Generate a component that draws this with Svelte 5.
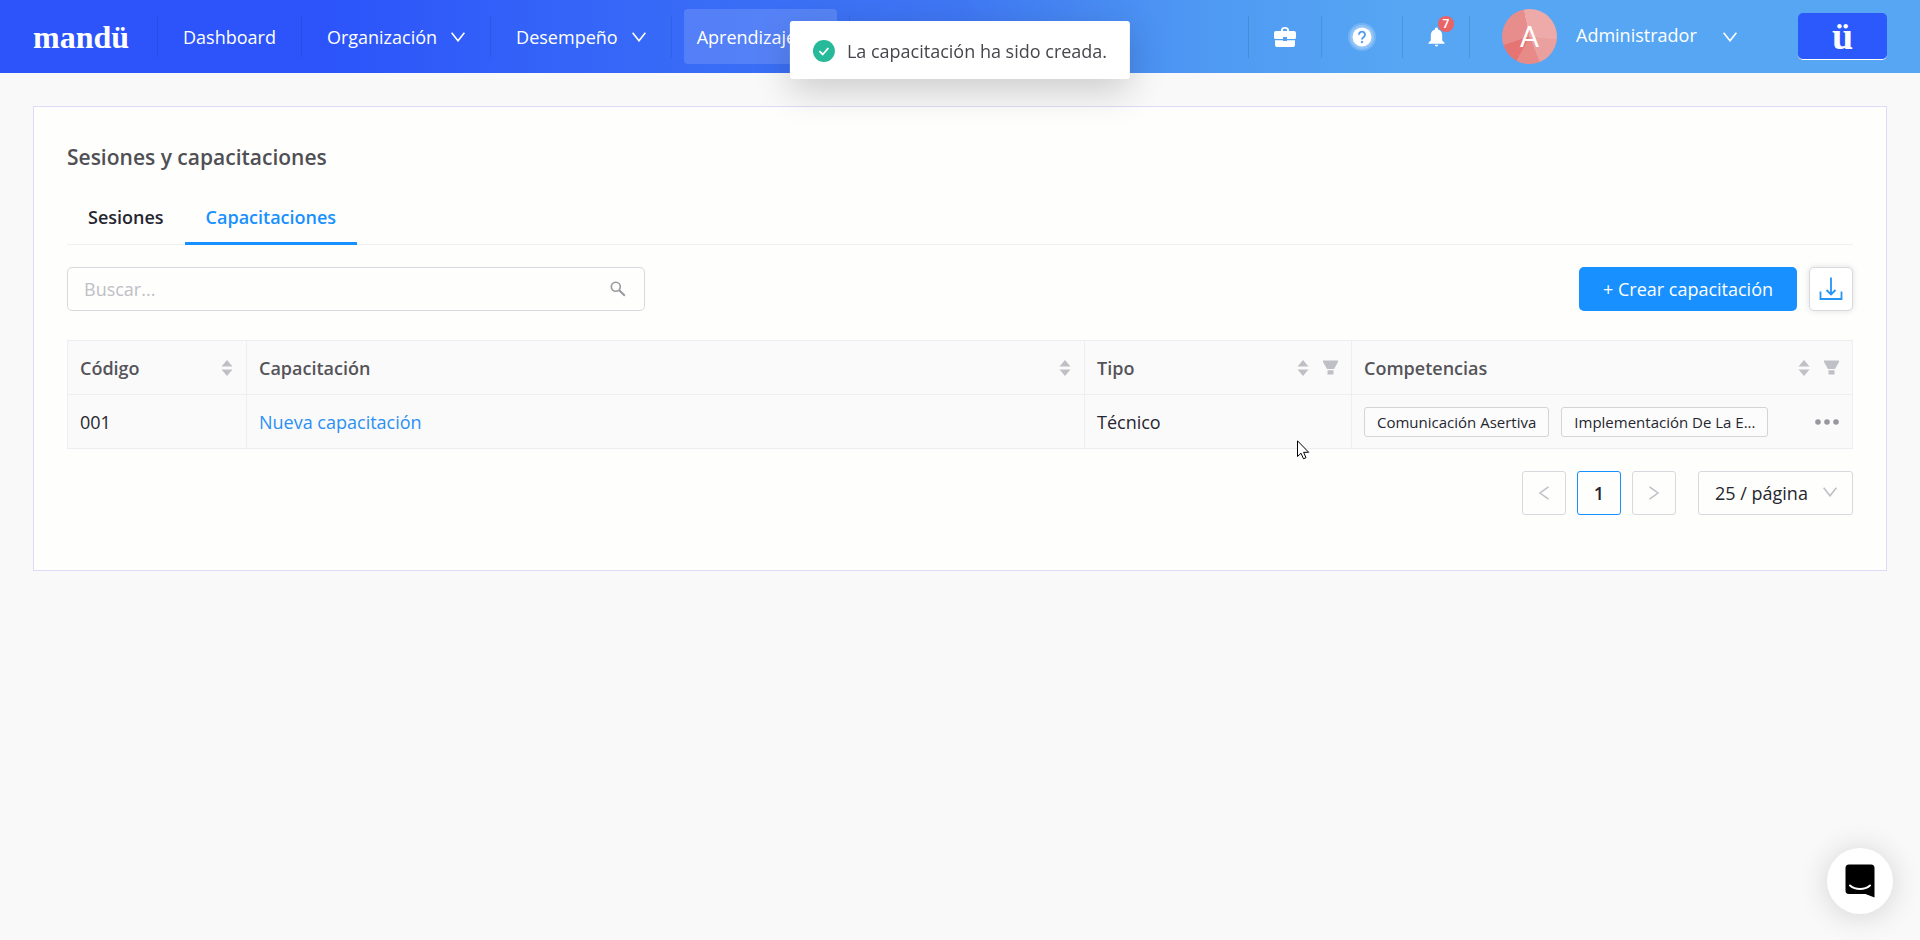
<script lang="ts">
  interface Training {
    code: string;
    name: string;
    type: string;
    skills: string[];
  }

  const menu = [
    { label: 'Dashboard', children: false, active: false },
    { label: 'Organización', children: true, active: false },
    { label: 'Desempeño', children: true, active: false },
    { label: 'Aprendizaje', children: true, active: true }
  ];

  const columns = [
    { key: 'code', title: 'Código', filter: false },
    { key: 'name', title: 'Capacitación', filter: false },
    { key: 'type', title: 'Tipo', filter: true },
    { key: 'skills', title: 'Competencias', filter: true }
  ];

  const trainings: Training[] = [
    {
      code: '001',
      name: 'Nueva capacitación',
      type: 'Técnico',
      skills: ['Comunicación Asertiva', 'Implementación De La E...']
    }
  ];

  let tab = $state('Capacitaciones');
  let search = $state('');
  let pageSize = $state('25');
</script>

{#snippet chevron()}
  <svg class="chevron" viewBox="0 0 14 10" fill="none" stroke="currentColor" stroke-width="1.6">
    <path d="M0.6 0.8L7 8.8L13.4 0.8" />
  </svg>
{/snippet}

<header class="topbar">
  <a class="logo" href="#home">mandü</a>

  <nav class="menu">
    {#each menu as item}
      <div class="menu-item">
        <a href="#{item.label}" class:active={item.active}>
          {item.label}
          {#if item.children}{@render chevron()}{/if}
        </a>
      </div>
    {/each}
  </nav>

  <div class="tools">
    <button class="tool work" aria-label="Trabajo">
      <svg width="22" height="20" viewBox="0 0 22 20" fill="currentColor">
        <path
          fill-rule="evenodd"
          d="M7 4V3.2C7 1.2 8.6 0 11 0s4 1.2 4 3.2V4h5a2 2 0 0 1 2 2v4.5a1.5 1.5 0 0 1-1.500 1.500H13v-2H9v2H1.500A1.500 1.500 0 0 1 0 10.500V6a2 2 0 0 1 2-2zM9 4h4v-.8C13 2.300 12.300 1.800 11 1.800S9 2.300 9 3.200z"
        />
        <path d="M1 13.200h8V14h4v-.8h8V18a2 2 0 0 1-2 2H3a2 2 0 0 1-2-2z" />
      </svg>
    </button>
    <button class="tool help" aria-label="Ayuda">
      <svg width="30" height="30" viewBox="0 0 30 30">
        <circle cx="15" cy="15" r="14" fill="#fff" opacity="0.18" />
        <circle cx="15" cy="15" r="12" fill="#fff" opacity="0.22" />
        <circle cx="15" cy="15" r="9.500" fill="#fff" />
        <path d="M12 12.800a3 3 0 1 1 4.700 2.300c-1 .8-1.700 1.100-1.700 2.500" fill="none" stroke="#529ff2" stroke-width="1.900" />
        <circle cx="15" cy="20" r="1.200" fill="#529ff2" />
      </svg>
    </button>
    <button class="tool alerts" aria-label="Notificaciones">
      <svg width="17" height="20" viewBox="0 0 17 20" fill="currentColor">
        <path
          d="M8.500 0.500c.9 0 1.500.7 1.500 1.500v.6c2.600.7 4.200 2.800 4.200 5.600v5.300l2.300 2.300v.9H.5v-.9l2.300-2.300V8.200c0-2.800 1.600-4.900 4.200-5.600V2c0-.8.600-1.500 1.500-1.500zM6.800 17.700h3.400a1.700 1.700 0 0 1-3.400 0z"
        />
      </svg>
      <span class="badge">7</span>
    </button>
    <button class="user">
      <span class="avatar">A</span>
      <span class="user-name">Administrador</span>
      {@render chevron()}
    </button>
    <button class="brand">ü</button>
  </div>
</header>

<main class="card">
  <h1>Sesiones y capacitaciones</h1>

  <div class="tabs" role="tablist">
    {#each ['Sesiones', 'Capacitaciones'] as name}
      <button role="tab" aria-selected={tab === name} class:selected={tab === name} onclick={() => (tab = name)}>
        {name}
      </button>
    {/each}
  </div>

  <div class="toolbar">
    <div class="search">
      <input type="text" placeholder="Buscar..." aria-label="Buscar" bind:value={search} />
      <svg width="16" height="16" viewBox="0 0 16 16" fill="none" stroke="currentColor">
        <circle cx="5.800" cy="5.800" r="4.500" stroke-width="1.600" />
        <path d="M9.200 9.200L14.800 14.800" stroke-width="2" />
      </svg>
    </div>
    <div class="actions">
      <button class="primary">+ Crear capacitación</button>
      <button class="download" aria-label="Descargar">
        <svg width="24" height="24" viewBox="0 0 24 24" fill="none" stroke="currentColor" stroke-width="1.800">
          <path d="M12 0.500V17M7.500 13L12 17.500L16.500 13M1.500 14.500V22h21v-7.500" />
        </svg>
      </button>
    </div>
  </div>

  <table>
    <colgroup>
      {#each columns as col}
        <col class="col-{col.key}" />
      {/each}
    </colgroup>
    <thead>
      <tr>
        {#each columns as col}
          <th scope="col">
            <div class="head">
              <span class="head-title">{col.title}</span>
              <svg width="12" height="18" viewBox="0 0 12 18" fill="currentColor">
                <path d="M6 1L11.500 7.500H0.500zM6 17L0.500 10.500h11z" />
              </svg>
              {#if col.filter}
                <svg width="15" height="15" viewBox="0 0 15 15" fill="currentColor">
                  <path d="M0 0.500h15v1.500L11 9H4L0 2zM4.500 10.300h6V14.500h-6z" />
                </svg>
              {/if}
            </div>
          </th>
        {/each}
      </tr>
    </thead>
    <tbody>
      {#each trainings as row}
        <tr>
          <td>{row.code}</td>
          <td><a href="#{row.code}">{row.name}</a></td>
          <td>{row.type}</td>
          <td>
            <div class="skills">
              {#each row.skills as skill}
                <span class="tag">{skill}</span>
              {/each}
              <button class="more" aria-label="Más opciones">
                <svg width="24" height="6" viewBox="0 0 24 6" fill="currentColor">
                  <circle cx="3" cy="3" r="2.800" />
                  <circle cx="12" cy="3" r="2.800" />
                  <circle cx="21" cy="3" r="2.800" />
                </svg>
              </button>
            </div>
          </td>
        </tr>
      {/each}
    </tbody>
  </table>

  <div class="pagination">
    <button class="page" disabled aria-label="Anterior">
      <svg width="10" height="14" viewBox="0 0 10 14" fill="none" stroke="currentColor" stroke-width="1.500">
        <path d="M9.500 0.800L1 7L9.500 13.200" />
      </svg>
    </button>
    <button class="page current">1</button>
    <button class="page" disabled aria-label="Siguiente">
      <svg width="10" height="14" viewBox="0 0 10 14" fill="none" stroke="currentColor" stroke-width="1.500">
        <path d="M0.500 0.800L9 7L0.500 13.200" />
      </svg>
    </button>
    <div class="page-size">
      <select bind:value={pageSize} aria-label="Resultados por página">
        <option value="25">25 / página</option>
        <option value="50">50 / página</option>
      </select>
      {@render chevron()}
    </div>
  </div>
</main>

<div class="toast" role="status">
  <svg width="22" height="22" viewBox="0 0 22 22">
    <circle cx="11" cy="11" r="11" fill="#26b99a" />
    <path d="M6.500 11.200L9.800 14.500L15.500 8" fill="none" stroke="#fff" stroke-width="1.800" />
  </svg>
  La capacitación ha sido creada.
</div>

<button class="chat" aria-label="Chat">
  <svg width="30" height="34" viewBox="0 0 30 34">
    <path d="M4 0.500h22a3.500 3.500 0 0 1 3.500 3.500v29.500L20.500 30H4a3.500 3.500 0 0 1-3.500-3.500V4A3.500 3.500 0 0 1 4 .5z" fill="#000" />
    <path d="M5 21.500c5.500 4.700 14.500 4.700 20 0" fill="none" stroke="#fff" stroke-width="2" stroke-linecap="round" />
  </svg>
</button>

<svg class="cursor" width="13" height="20" viewBox="0 0 13 20" fill="#fff" stroke="#000">
  <path d="M0.500 0.800V16.500L4 13.200L6.500 18.800L9 17.700L6.600 12.300H11.700z" />
</svg>

<style>
  :global(body) {
    min-height: 100vh;
    background: #f9f9f9;
    color: #262630;
    font: 18px/28px 'Open Sans', 'Noto Sans', sans-serif;
  }

  button,
  input,
  select {
    font: inherit;
    color: inherit;
    box-sizing: border-box;
  }

  button {
    padding: 0;
    border: none;
    background: none;
    cursor: pointer;
  }

  a {
    color: inherit;
    text-decoration: none;
  }

  svg {
    flex-shrink: 0;
    display: block;
  }

  .chevron {
    width: 14px;
    height: 10px;
  }

  .topbar {
    display: flex;
    align-items: center;
    height: 73px;
    padding: 0 33px;
    background: linear-gradient(90deg, #2c54fa 17%, #3565f8 30%, #3f77f3 50%, #4e98f3 62%, #56a6f3 73%);
    color: #fff;
  }

  .logo {
    width: 124px;
    font: bold 32px/40px 'Liberation Serif', serif;
  }

  .menu {
    display: flex;
    flex: 1;
  }

  .menu-item {
    display: flex;
    align-items: center;
    height: 42px;
    padding: 0 12px;
    border-left: 1px solid rgba(0, 0, 0, 0.07);
  }

  .menu-item:last-child {
    border-right: 1px solid rgba(0, 0, 0, 0.07);
  }

  .menu-item a {
    display: flex;
    align-items: center;
    gap: 14px;
    height: 55px;
    padding: 0 13px;
    border-radius: 4px;
  }

  .menu-item a.active {
    background: rgba(255, 255, 255, 0.14);
  }

  .tools {
    display: flex;
    align-items: center;
  }

  .tool {
    display: flex;
    align-items: center;
    justify-content: center;
    box-sizing: border-box;
    height: 42px;
    border-left: 1px solid rgba(0, 0, 0, 0.1);
  }

  .work {
    width: 73px;
  }

  .help {
    width: 81px;
  }

  .alerts {
    position: relative;
    width: 68px;
    border-right: 1px solid rgba(0, 0, 0, 0.1);
  }

  .badge {
    position: absolute;
    top: 0;
    right: 15px;
    width: 16px;
    height: 16px;
    border-radius: 50%;
    background: #ea6365;
    font: 600 12px/16px Roboto, sans-serif;
    text-align: center;
  }

  .user {
    display: flex;
    align-items: center;
    margin-left: 32px;
    text-align: left;
  }

  .avatar {
    width: 55px;
    height: 55px;
    margin-right: 19px;
    border-radius: 50%;
    background: conic-gradient(from -12deg, #edaaa9 0 108deg, #e9a09f 108deg 170deg, #e78a88 170deg 220deg, #e67473 220deg 264deg, #e78e8c 264deg);
    font: 28px/55px Lato, sans-serif;
    text-align: center;
  }

  .user-name {
    width: 147px;
    padding-bottom: 4px;
  }

  .brand {
    width: 89px;
    height: 47px;
    margin-left: 61px;
    border-bottom: 1px solid #fff;
    border-radius: 5px;
    background: #2b59fc;
    font: bold 38px/40px 'Liberation Serif', serif;
  }

  .card {
    margin: 33px;
    padding: 33px 33px 55px;
    border: 1px solid #dddcf8;
    background: #fefefd;
  }

  h1 {
    margin: 0;
    font-size: 21px;
    font-weight: 600;
    line-height: 34px;
    color: #4f4f54;
  }

  .tabs {
    display: flex;
    height: 70px;
    border-bottom: 1px solid #f0f0f4;
  }

  .tabs button {
    height: 71px;
    padding: 18px 21px 0;
    border-bottom: 3px solid transparent;
    font-weight: 600;
    font-size: 18px;
  }

  .tabs button.selected {
    border-color: #1890ff;
    color: #1890ff;
  }

  .toolbar {
    display: flex;
    justify-content: space-between;
    margin: 22px 0 29px;
  }

  .search {
    display: flex;
    align-items: center;
    box-sizing: border-box;
    width: 578px;
    height: 44px;
    padding: 0 18px 0 16px;
    border: 1px solid #d8d8de;
    border-radius: 5px;
    color: #98989f;
  }

  .search input {
    flex: 1;
    padding: 0;
    border: none;
    outline: none;
    background: none;
    color: #262630;
  }

  .search input::placeholder {
    color: #bfbfc6;
  }

  .actions {
    display: flex;
    gap: 12px;
  }

  .primary {
    width: 218px;
    height: 44px;
    border-radius: 5px;
    background: #1890ff;
    color: #fff;
  }

  .download {
    display: flex;
    align-items: center;
    justify-content: center;
    width: 44px;
    height: 44px;
    border: 1px solid #d8d8de;
    border-radius: 5px;
    background: #fff;
    box-shadow: 0 0 6px rgba(0, 0, 0, 0.12);
    color: #2694f2;
  }

  table {
    width: 100%;
    table-layout: fixed;
    border-collapse: collapse;
    background: #fafafa;
  }

  .col-code {
    width: 179px;
  }

  .col-type {
    width: 267px;
  }

  .col-skills {
    width: 501px;
  }

  th,
  td {
    height: 53px;
    padding: 0 11px 0 12px;
    border: 1px solid #f0edf2;
    text-align: left;
  }

  th {
    font-weight: 600;
    color: #545459;
  }

  .head {
    display: flex;
    align-items: center;
    gap: 14px;
    padding-right: 2px;
    color: #bfbfc6;
  }

  .head-title {
    flex: 1;
    color: #545459;
  }

  td a {
    color: #2b90f5;
  }

  .skills {
    display: flex;
    align-items: center;
    gap: 12px;
  }

  .tag {
    padding: 0 12px;
    border: 1px solid #d4d4d8;
    border-radius: 3px;
    background: #fcfcfc;
    font-size: 15px;
    line-height: 28px;
  }

  .more {
    margin: 0 2px 0 auto;
    padding: 8px 0;
    color: #97979f;
  }

  .pagination {
    display: flex;
    justify-content: flex-end;
    gap: 11px;
    margin-top: 22px;
  }

  .page {
    display: flex;
    align-items: center;
    justify-content: center;
    width: 44px;
    height: 44px;
    border: 1px solid #d8d8de;
    border-radius: 3px;
    color: #bfbfc6;
  }

  .page.current {
    border-color: #1890ff;
    color: #262630;
    font-weight: 600;
  }

  .page-size {
    position: relative;
    margin-left: 11px;
    color: #262630;
  }

  .page-size select {
    width: 155px;
    height: 44px;
    padding: 0 16px;
    border: 1px solid #d8d8de;
    border-radius: 3px;
    background: none;
    appearance: none;
  }

  .page-size .chevron {
    position: absolute;
    top: 16px;
    right: 16px;
    color: #bfbfc6;
    pointer-events: none;
  }

  .toast {
    position: fixed;
    top: 21px;
    left: 50%;
    display: flex;
    align-items: center;
    gap: 12px;
    box-sizing: border-box;
    height: 58px;
    padding: 2px 23px 0;
    border-radius: 3px;
    background: #fff;
    box-shadow: 0 12px 36px rgba(0, 0, 0, 0.18);
    color: #46464d;
    white-space: nowrap;
    transform: translateX(-50%);
  }

  .chat {
    position: fixed;
    right: 27px;
    bottom: 26px;
    display: flex;
    align-items: center;
    justify-content: center;
    width: 66px;
    height: 66px;
    border-radius: 50%;
    background: #fff;
    box-shadow: 0 2px 30px rgba(0, 0, 0, 0.16);
  }

  .cursor {
    position: fixed;
    top: 440px;
    left: 1297px;
    pointer-events: none;
  }
</style>
